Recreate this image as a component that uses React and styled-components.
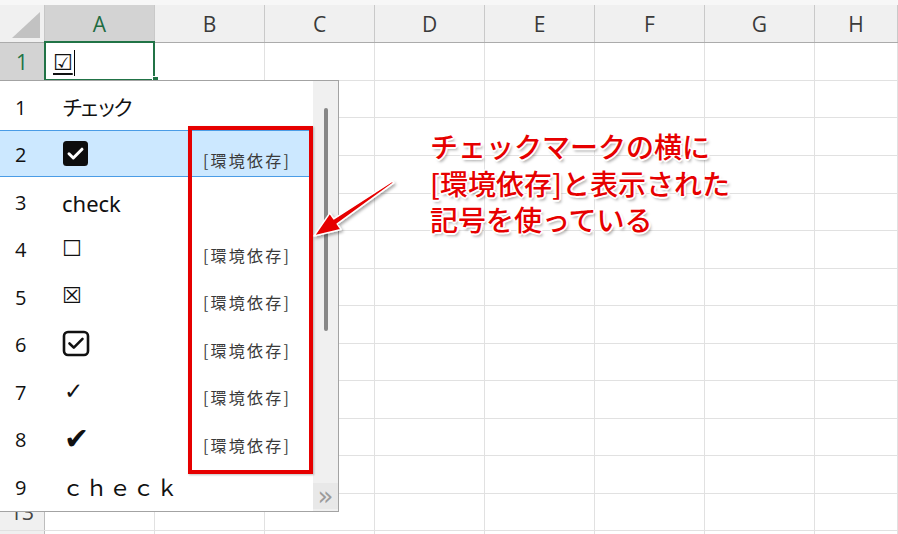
import React from 'react';
import styled, { createGlobalStyle } from 'styled-components';

const GlobalStyle = createGlobalStyle`
  html, body { margin: 0; padding: 0; background: #fff; }
  body {
    width: 898px;
    height: 534px;
    overflow: hidden;
    font-family: "Open Sans", "Noto Sans CJK JP", sans-serif;
  }
`;

const Page = styled.div`
  position: relative;
  width: 898px;
  height: 534px;
  overflow: hidden;
  background: #fff;
`;

const TopStrip = styled.div`
  height: 5px;
  background: #f7f7f7;
`;

const HeaderRow = styled.div`
  display: flex;
  height: 38px;
  box-sizing: border-box;
  background: #f0f0f0;
  border-bottom: 1px solid #ababab;
`;

const Corner = styled.div`
  width: 45px;
  flex: none;
  box-sizing: border-box;
  border-right: 1px solid #c6c6c6;
  display: flex;
  align-items: flex-end;
  justify-content: flex-end;
  padding: 0 3px 3px 0;
`;

const ColHead = styled.div`
  width: ${p => (p.$last ? 'auto' : '110px')};
  flex: ${p => (p.$last ? '1' : 'none')};
  box-sizing: border-box;
  border-right: 1px solid #c9c9c9;
  display: flex;
  align-items: center;
  justify-content: center;
  font-size: 21px;
  color: ${p => (p.$selected ? '#1e6b41' : '#3a3a3a')};
  background: ${p => (p.$selected ? '#d3d3d3' : 'transparent')};
`;

const Row = styled.div`
  display: flex;
  height: ${p => p.$h}px;
  box-sizing: border-box;
  border-bottom: 1px solid #e1e1e1;
`;

const RowHead = styled.div`
  width: 45px;
  flex: none;
  box-sizing: border-box;
  border-right: 1px solid #bdbdbd;
  display: flex;
  align-items: center;
  justify-content: center;
  font-size: 21px;
  color: ${p => (p.$selected ? '#217346' : '#444')};
  background: ${p => (p.$selected ? '#d3d3d3' : '#f0f0f0')};
`;

const Cell = styled.div`
  position: relative;
  width: ${p => (p.$last ? 'auto' : '110px')};
  flex: ${p => (p.$last ? '1' : 'none')};
  box-sizing: border-box;
  border-right: 1px solid #e1e1e1;
  display: flex;
  align-items: center;
  padding-left: 8px;

  ${p =>
    p.$active &&
    `
    &::after {
      content: '';
      position: absolute;
      left: -1px;
      top: -2px;
      width: 111px;
      height: 40px;
      box-sizing: border-box;
      border: 2px solid #217346;
    }
    &::before {
      content: '';
      position: absolute;
      left: 107px;
      top: 33px;
      width: 5px;
      height: 5px;
      background: #217346;
      border: 1px solid #fff;
      z-index: 1;
    }
  `}
`;

const Typed = styled.span`
  font-family: "DejaVu Sans", sans-serif;
  font-size: 22px;
  line-height: 1;
  color: #111;
  text-decoration: underline;
  text-decoration-thickness: 2px;
  text-underline-offset: 3px;
  margin-top: 2px;
`;

const Caret = styled.span`
  width: 1px;
  height: 26px;
  background: #000;
  margin-left: 1px;
  margin-top: 2px;
`;

const Dropdown = styled.div`
  position: absolute;
  left: 0;
  top: 80px;
  width: 339px;
  height: 432px;
  box-sizing: border-box;
  background: #fff;
  border: 1px solid #a3a3a3;
  border-left: none;
  display: flex;
  z-index: 5;
`;

const List = styled.div`
  flex: 1;
  padding-top: 1px;
`;

const Item = styled.div`
  display: flex;
  align-items: center;
  height: ${p => p.$h}px;
  box-sizing: border-box;
  background: ${p => (p.$active ? '#cce8ff' : 'transparent')};
  border-top: 1px solid ${p => (p.$active ? '#4a9ce6' : 'transparent')};
  border-bottom: 1px solid ${p => (p.$active ? '#4a9ce6' : 'transparent')};
`;

const Num = styled.div`
  width: 62px;
  flex: none;
  box-sizing: border-box;
  padding-left: 15px;
  padding-top: 2px;
  font-size: 20px;
  color: #111;
`;

const Label = styled.div`
  width: 141px;
  flex: none;
  display: flex;
  align-items: center;
  font-family: "Noto Sans", "Noto Sans CJK JP", sans-serif;
  font-size: ${p => p.$size || 21}px;
  letter-spacing: ${p => p.$spacing || 0}px;
  color: #111;
  padding-top: ${p => p.$drop || 0}px;
`;

const Glyph = styled.span`
  font-family: "DejaVu Sans", sans-serif;
  font-size: ${p => p.$size}px;
  line-height: 1;
  color: #111;
  margin-left: ${p => p.$shift || 0}px;
`;

const Env = styled.div`
  padding-top: 12px;
  font-family: "Noto Sans CJK JP", sans-serif;
  font-size: 16px;
  letter-spacing: 2.2px;
  color: #3a3a3a;
`;

const Scrollbar = styled.div`
  width: 25px;
  flex: none;
  background: #f0f0f0;
  display: flex;
  flex-direction: column;
  align-items: center;
`;

const Thumb = styled.div`
  margin-top: 27px;
  width: 4px;
  height: 223px;
  border-radius: 2px;
  background: #878787;
`;

const MoreButton = styled.div`
  margin-top: auto;
  margin-bottom: 2px;
  width: 25px;
  height: 26px;
  background: #e8e8e8;
  display: flex;
  align-items: center;
  justify-content: center;
  font-family: "DejaVu Sans", sans-serif;
  font-size: 26px;
  line-height: 1;
  color: #9b9b9b;
`;

const RedFrame = styled.div`
  position: absolute;
  left: 188px;
  top: 45px;
  width: 125px;
  height: 348px;
  box-sizing: border-box;
  border: 4px solid #e60000;
  box-shadow: 1px 1px 2px rgba(0, 0, 0, 0.25);
`;

const Callout = styled.div`
  position: absolute;
  left: 430px;
  top: 128px;
  font-family: "Noto Sans CJK JP", sans-serif;
  font-size: 28px;
  font-weight: 500;
  line-height: 36.5px;
  color: #e60000;
  white-space: nowrap;
  text-shadow:
    1px 1px 0 #fff, -1px -1px 0 #fff, 1px -1px 0 #fff, -1px 1px 0 #fff,
    0 2px 0 #fff, 2px 0 0 #fff, 0 -2px 0 #fff, -2px 0 0 #fff,
    2px 3px 3px rgba(0, 0, 0, 0.35);
  z-index: 6;
`;

const ArrowLayer = styled.svg`
  position: absolute;
  left: 0;
  top: 0;
  pointer-events: none;
  z-index: 7;
`;

const rowHeights = [38, 37, 38, 38, 37, 38, 37, 38, 37, 38, 37, 38, 37, 38];
const itemHeights = [48, 47, 48, 47, 48, 47, 48, 47, 48];
const cols = ['A', 'B', 'C', 'D', 'E', 'F', 'G', 'H'];

const CheckedBox = () => (
  <svg width="27" height="27" viewBox="0 0 27 27">
    <rect x="1" y="1" width="25" height="25" rx="3.5" fill="#0d0d0d" />
    <path d="M7 13.8 L11.3 18 L20 9.2" fill="none" stroke="#fff" strokeWidth="3" strokeLinecap="round" strokeLinejoin="round" />
  </svg>
);

const OutlineCheckBox = () => (
  <svg width="28" height="27" viewBox="0 0 28 27">
    <rect x="2" y="2" width="24" height="23" rx="4" fill="none" stroke="#111" strokeWidth="2.6" />
    <path d="M7.5 13.5 L11.8 17.6 L20.5 8.8" fill="none" stroke="#111" strokeWidth="2.6" strokeLinecap="round" strokeLinejoin="round" />
  </svg>
);

const items = [
  { label: 'チェック', size: 21, spacing: -4 },
  { icon: <CheckedBox />, env: true, active: true },
  { label: 'check', size: 22, drop: 3 },
  { glyph: '☐', glyphSize: 22, env: true },
  { glyph: '☒', glyphSize: 22, env: true },
  { icon: <OutlineCheckBox />, env: true },
  { glyph: '✓', glyphSize: 23, shift: 2, env: true },
  { glyph: '✔', glyphSize: 30, shift: 2, env: true },
  { label: 'ｃｈｅｃｋ', size: 22, spacing: 1.5 },
];

// arrow body tapers toward the head, tip points at the red frame
const arrowPoints = '392.4,181.2 333.8,218.9 329.8,213.1 314,236 341.1,229.6 337.2,223.8 393.6,182.8';

export default function App() {
  return (
    <Page>
      <GlobalStyle />
      <TopStrip />
      <HeaderRow>
        <Corner>
          <svg width="29" height="27" viewBox="0 0 29 27">
            <polygon points="28,0 28,26 0,26" fill="#c2c2c2" />
          </svg>
        </Corner>
        {cols.map((c, i) => (
          <ColHead key={c} $selected={i === 0} $last={i === cols.length - 1}>
            {c}
          </ColHead>
        ))}
      </HeaderRow>

      {rowHeights.map((h, r) => (
        <Row key={r} $h={h}>
          <RowHead $selected={r === 0}>{r + 1}</RowHead>
          {cols.map((c, i) => (
            <Cell key={c} $last={i === cols.length - 1} $active={r === 0 && i === 0}>
              {r === 0 && i === 0 && (
                <>
                  <Typed>☑</Typed>
                  <Caret />
                </>
              )}
            </Cell>
          ))}
        </Row>
      ))}

      <Dropdown>
        <List>
          {items.map((it, i) => (
            <Item key={i} $h={itemHeights[i]} $active={it.active}>
              <Num>{i + 1}</Num>
              <Label $size={it.size} $spacing={it.spacing} $drop={it.drop}>
                {it.label}
                {it.icon}
                {it.glyph && (
                  <Glyph $size={it.glyphSize} $shift={it.shift}>
                    {it.glyph}
                  </Glyph>
                )}
              </Label>
              {it.env && <Env>[環境依存]</Env>}
            </Item>
          ))}
        </List>
        <Scrollbar>
          <Thumb />
          <MoreButton>»</MoreButton>
        </Scrollbar>
        <RedFrame />
      </Dropdown>

      <Callout>
        チェックマークの横に
        <br />
        [環境依存]と表示された
        <br />
        記号を使っている
      </Callout>

      <ArrowLayer width="898" height="534" viewBox="0 0 898 534">
        <defs>
          <filter id="arrowShadow" x="-20%" y="-20%" width="140%" height="140%">
            <feDropShadow dx="1.5" dy="2" stdDeviation="1.5" floodColor="#000" floodOpacity="0.35" />
          </filter>
        </defs>
        <polygon
          points={arrowPoints}
          fill="#e60000"
          stroke="#fff"
          strokeWidth="1.5"
          strokeLinejoin="round"
          filter="url(#arrowShadow)"
        />
      </ArrowLayer>
    </Page>
  );
}
